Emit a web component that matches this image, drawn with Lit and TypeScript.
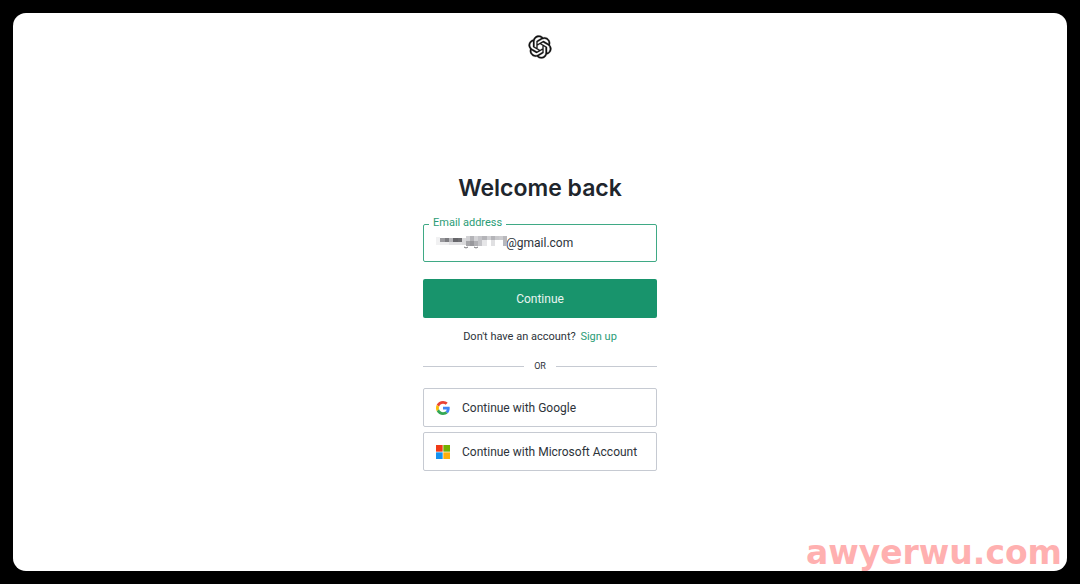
import { LitElement, html, css, svg } from "lit";
import { customElement } from "lit/decorators.js";

// Blocks of the redaction strip: [x, y, width, height, shade]
const REDACTION: Array<[number, number, number, number, string]> = [
  [0, 1, 4, 8, "#f1f1f2"],
  [4, 2, 5, 4, "#9a9a9e"],
  [9, 2, 4, 4, "#7c7c80"],
  [13, 2, 4, 4, "#b4b4b8"],
  [17, 2, 5, 4, "#66666a"],
  [22, 2, 4, 4, "#6e6e72"],
  [4, 6, 9, 3, "#ededee"],
  [13, 6, 13, 3, "#e0e0e2"],
  [26, 2, 4, 7, "#dadadc"],
  [30, 0, 4, 5, "#d2d2d5"],
  [30, 5, 4, 5, "#a6a6aa"],
  [34, 0, 4, 5, "#b4b4b8"],
  [34, 5, 4, 5, "#98989c"],
  [38, 0, 4, 5, "#d4d4d7"],
  [38, 5, 4, 5, "#b0b0b4"],
  [42, 0, 4, 10, "#c4c4c8"],
  [46, 0, 5, 4, "#b4b4b8"],
  [46, 4, 5, 6, "#e6e6e8"],
  [51, 0, 4, 4, "#d0d0d3"],
  [55, 0, 4, 4, "#b4b4b8"],
  [55, 4, 4, 6, "#e0e0e2"],
  [59, 0, 4, 4, "#c8c8cb"],
  [63, 0, 4, 4, "#cccccf"],
  [67, 0, 4, 10, "#b8b8bc"],
];

@customElement("app-root")
export class AppRoot extends LitElement {
  static styles = css`
    :host {
      display: block;
      box-sizing: border-box;
      min-height: 100vh;
      padding: 13px;
      background: #000;
      color: #2d333a;
      font-family: Roboto, "Liberation Sans", sans-serif;
      font-size: 12px;
      line-height: 16px;
    }
    *,
    *::before,
    *::after {
      box-sizing: border-box;
    }
    .page {
      position: relative;
      display: flex;
      flex-direction: column;
      align-items: center;
      min-height: calc(100vh - 26px);
      padding: 22px 16px;
      border-radius: 13px;
      background: #fff;
    }
    .logo {
      display: block;
      width: 24px;
      height: 24px;
      fill: #111;
      stroke: #111;
      stroke-width: 0.3;
    }
    main {
      display: flex;
      flex-direction: column;
      width: 100%;
      max-width: 234px;
      margin-top: 113px;
    }
    h1 {
      margin: 0 0 20px;
      font-family: Inter, "Liberation Sans", sans-serif;
      font-size: 23px;
      line-height: 32px;
      font-weight: 600;
      text-align: center;
      color: #20252c;
    }
    form {
      display: flex;
      flex-direction: column;
      gap: 17px;
    }
    .field {
      position: relative;
      display: flex;
    }
    .field label {
      position: absolute;
      top: -9px;
      left: 6px;
      padding: 0 4px;
      background: #fff;
      color: #2a9c76;
      font-size: 11px;
    }
    .field input {
      width: 100%;
      height: 38px;
      padding: 0 12px 0 82px;
      border: 1px solid #3fa985;
      border-radius: 2px;
      outline: none;
      background: #fff;
      color: #2d333a;
      font: inherit;
    }
    .redaction {
      position: absolute;
      top: 12px;
      left: 13px;
      width: 71px;
      height: 14px;
    }
    .primary {
      height: 39px;
      border: 0;
      border-radius: 2px;
      background: #18946c;
      color: #e8f5f0;
      font: inherit;
    }
    .signup {
      margin: 11px 0 13px;
      font-size: 11px;
      text-align: center;
    }
    .signup a {
      margin-left: 2px;
      color: #2a9c76;
      text-decoration: none;
    }
    .divider {
      display: flex;
      align-items: center;
      gap: 10px;
      margin-bottom: 14px;
      font-size: 9px;
    }
    .divider::before,
    .divider::after {
      content: "";
      flex: 1;
      height: 1px;
      background: #c6cad2;
    }
    .providers {
      display: flex;
      flex-direction: column;
      gap: 5px;
    }
    .provider {
      display: flex;
      align-items: center;
      gap: 12px;
      height: 39px;
      padding: 0 12px;
      border: 1px solid #c6cad2;
      border-radius: 2px;
      background: #fff;
      color: #2d333a;
      font: inherit;
      white-space: nowrap;
    }
    .provider svg {
      flex: none;
      width: 14px;
      height: 14px;
    }
    .watermark {
      position: absolute;
      right: 5px;
      bottom: -2px;
      color: #ffb0b0;
      font-family: "DejaVu Sans", sans-serif;
      font-size: 33px;
      line-height: 40px;
      font-weight: 700;
    }
  `;

  render() {
    return html`
      <div class="page">
        <svg class="logo" viewBox="-0.5 -0.5 25 25" role="img" aria-label="OpenAI">
          <path
            d="M22.2819 9.8211a5.9847 5.9847 0 0 0-.5157-4.9108 6.0462 6.0462 0 0 0-6.5098-2.9A6.0651 6.0651 0 0 0 4.9807 4.1818a5.9847 5.9847 0 0 0-3.9977 2.9 6.0462 6.0462 0 0 0 .7427 7.0966 5.98 5.98 0 0 0 .511 4.9107 6.051 6.051 0 0 0 6.5146 2.9001A5.9847 5.9847 0 0 0 13.2599 24a6.0557 6.0557 0 0 0 5.7718-4.2058 5.9894 5.9894 0 0 0 3.9977-2.9001 6.0557 6.0557 0 0 0-.7475-7.073zm-9.022 12.6081a4.4755 4.4755 0 0 1-2.8764-1.0408l.1419-.0804 4.7783-2.7582a.7948.7948 0 0 0 .3927-.6813v-6.7369l2.02 1.1686a.071.071 0 0 1 .038.052v5.5826a4.504 4.504 0 0 1-4.4945 4.4944zm-9.6607-4.1254a4.4708 4.4708 0 0 1-.5346-3.0137l.142.0852 4.783 2.7582a.7712.7712 0 0 0 .7806 0l5.8428-3.3685v2.3324a.0804.0804 0 0 1-.0332.0615L9.74 19.9502a4.4992 4.4992 0 0 1-6.1408-1.6464zM2.3408 7.8956a4.485 4.485 0 0 1 2.3655-1.9728V11.6a.7664.7664 0 0 0 .3879.6765l5.8144 3.3543-2.0201 1.1685a.0757.0757 0 0 1-.071 0l-4.8303-2.7865A4.504 4.504 0 0 1 2.3408 7.8956zm16.5963 3.8558L13.1038 8.364 15.1192 7.2a.0757.0757 0 0 1 .071 0l4.8303 2.7913a4.4944 4.4944 0 0 1-.6765 8.1042v-5.6772a.79.79 0 0 0-.407-.667zm2.0107-3.0231l-.142-.0852-4.7735-2.7818a.7759.7759 0 0 0-.7854 0L9.409 9.2297V6.8974a.0662.0662 0 0 1 .0284-.0615l4.8303-2.7866a4.4992 4.4992 0 0 1 6.6802 4.66zM8.3065 12.863l-2.02-1.1638a.0804.0804 0 0 1-.038-.0567V6.0742a4.4992 4.4992 0 0 1 7.3757-3.4537l-.142.0805L8.704 5.459a.7948.7948 0 0 0-.3927.6813zm1.0976-2.3654l2.602-1.4998 2.6069 1.4998v2.9994l-2.5974 1.4997-2.6067-1.4997Z"
          />
        </svg>
        <main>
          <h1>Welcome back</h1>
          <form @submit=${(e: Event) => e.preventDefault()}>
            <div class="field">
              <input id="email" type="text" inputmode="email" value="@gmail.com" />
              <label for="email">Email address</label>
              <svg class="redaction" viewBox="0 0 71 14" aria-hidden="true">
                ${REDACTION.map(
                  ([x, y, w, h, shade]) =>
                    svg`<rect x=${x} y=${y} width=${w} height=${h} fill=${shade} shape-rendering="crispEdges"/>`
                )}
                <path d="M28 11q2 2 4 0M38 11q2 2 4 0" fill="none" stroke="#77777b" />
              </svg>
            </div>
            <button class="primary" type="submit">Continue</button>
          </form>
          <p class="signup">Don't have an account? <a href="#signup">Sign up</a></p>
          <div class="divider">OR</div>
          <div class="providers">
            <button class="provider" type="button">
              <svg viewBox="0 0 48 48" aria-hidden="true">
                <path fill="#EA4335" d="M24 9.5c3.54 0 6.71 1.22 9.21 3.6l6.85-6.85C35.9 2.38 30.47 0 24 0 14.62 0 6.51 5.38 2.56 13.22l7.98 6.19C12.43 13.72 17.74 9.5 24 9.5z" />
                <path fill="#4285F4" d="M46.98 24.55c0-1.57-.15-3.09-.38-4.55H24v9.02h12.94c-.58 2.96-2.26 5.48-4.78 7.18l7.73 6c4.51-4.18 7.09-10.36 7.09-17.65z" />
                <path fill="#FBBC05" d="M10.53 28.59c-.48-1.45-.76-2.99-.76-4.59s.27-3.14.76-4.59l-7.98-6.19C.92 16.46 0 20.12 0 24s.92 7.54 2.56 10.78l7.97-6.19z" />
                <path fill="#34A853" d="M24 48c6.48 0 11.93-2.13 15.89-5.81l-7.73-6c-2.15 1.45-4.92 2.3-8.16 2.3-6.26 0-11.57-4.22-13.47-9.91l-7.98 6.19C6.51 42.62 14.62 48 24 48z" />
              </svg>
              Continue with Google
            </button>
            <button class="provider" type="button">
              <svg viewBox="0 0 21 21" aria-hidden="true">
                <path fill="#f03a17" d="M0 0h10v10H0z" />
                <path fill="#72b000" d="M11 0h10v10H11z" />
                <path fill="#1492f0" d="M0 11h10v10H0z" />
                <path fill="#ffae0d" d="M11 11h10v10H11z" />
              </svg>
              Continue with Microsoft Account
            </button>
          </div>
        </main>
        <div class="watermark">awyerwu.com</div>
      </div>
    `;
  }
}
